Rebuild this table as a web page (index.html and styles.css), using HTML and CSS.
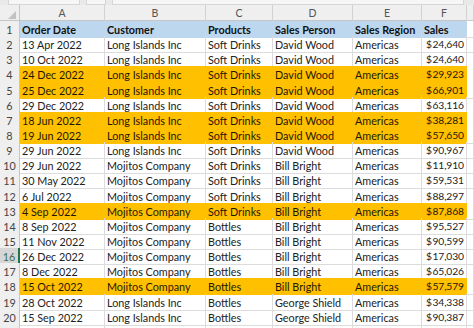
FILE: index.html
```html
<!DOCTYPE html>
<html>
<head>
<meta charset="utf-8">
<link rel="stylesheet" href="styles.css">
</head>
<body>
<div class="sheet">
  <div class="topbar"><span class="box b1"></span><span class="box b2"></span><span class="box b3"></span></div>
  <div class="row colhead">
    <div class="corner"><span class="tri"></span></div>
    <div class="ch">A</div><div class="ch">B</div><div class="ch">C</div><div class="ch">D</div><div class="ch">E</div><div class="ch">F</div><div class="ch"></div>
  </div>
  <div class="row title"><div class="rh">1</div><div class="c">Order Date</div><div class="c">Customer</div><div class="c">Products</div><div class="c">Sales Person</div><div class="c">Sales Region</div><div class="c">Sales</div><div class="c g"></div></div>
  <div class="row"><div class="rh">2</div><div class="c">13 Apr 2022</div><div class="c">Long Islands Inc</div><div class="c">Soft Drinks</div><div class="c">David Wood</div><div class="c">Americas</div><div class="c m"><span>$</span><span>24,640</span></div><div class="c g"></div></div>
  <div class="row"><div class="rh">3</div><div class="c">10 Oct 2022</div><div class="c">Long Islands Inc</div><div class="c">Soft Drinks</div><div class="c">David Wood</div><div class="c">Americas</div><div class="c m"><span>$</span><span>24,640</span></div><div class="c g"></div></div>
  <div class="row hi"><div class="rh">4</div><div class="c">24 Dec 2022</div><div class="c">Long Islands Inc</div><div class="c">Soft Drinks</div><div class="c">David Wood</div><div class="c">Americas</div><div class="c m"><span>$</span><span>29,923</span></div><div class="c g"></div></div>
  <div class="row hi"><div class="rh">5</div><div class="c">25 Dec 2022</div><div class="c">Long Islands Inc</div><div class="c">Soft Drinks</div><div class="c">David Wood</div><div class="c">Americas</div><div class="c m"><span>$</span><span>66,901</span></div><div class="c g"></div></div>
  <div class="row"><div class="rh">6</div><div class="c">29 Dec 2022</div><div class="c">Long Islands Inc</div><div class="c">Soft Drinks</div><div class="c">David Wood</div><div class="c">Americas</div><div class="c m"><span>$</span><span>63,116</span></div><div class="c g"></div></div>
  <div class="row hi"><div class="rh">7</div><div class="c">18 Jun 2022</div><div class="c">Long Islands Inc</div><div class="c">Soft Drinks</div><div class="c">David Wood</div><div class="c">Americas</div><div class="c m"><span>$</span><span>38,281</span></div><div class="c g"></div></div>
  <div class="row hi"><div class="rh">8</div><div class="c">19 Jun 2022</div><div class="c">Long Islands Inc</div><div class="c">Soft Drinks</div><div class="c">David Wood</div><div class="c">Americas</div><div class="c m"><span>$</span><span>57,650</span></div><div class="c g"></div></div>
  <div class="row"><div class="rh">9</div><div class="c">29 Jun 2022</div><div class="c">Long Islands Inc</div><div class="c">Soft Drinks</div><div class="c">David Wood</div><div class="c">Americas</div><div class="c m"><span>$</span><span>90,967</span></div><div class="c g"></div></div>
  <div class="row"><div class="rh">10</div><div class="c">29 Jun 2022</div><div class="c">Mojitos Company</div><div class="c">Soft Drinks</div><div class="c">Bill Bright</div><div class="c">Americas</div><div class="c m"><span>$</span><span>11,910</span></div><div class="c g"></div></div>
  <div class="row"><div class="rh">11</div><div class="c">30 May 2022</div><div class="c">Mojitos Company</div><div class="c">Soft Drinks</div><div class="c">Bill Bright</div><div class="c">Americas</div><div class="c m"><span>$</span><span>59,531</span></div><div class="c g"></div></div>
  <div class="row"><div class="rh">12</div><div class="c">6 Jul 2022</div><div class="c">Mojitos Company</div><div class="c">Soft Drinks</div><div class="c">Bill Bright</div><div class="c">Americas</div><div class="c m"><span>$</span><span>88,297</span></div><div class="c g"></div></div>
  <div class="row hi"><div class="rh">13</div><div class="c">4 Sep 2022</div><div class="c">Mojitos Company</div><div class="c">Soft Drinks</div><div class="c">Bill Bright</div><div class="c">Americas</div><div class="c m"><span>$</span><span>87,868</span></div><div class="c g"></div></div>
  <div class="row"><div class="rh">14</div><div class="c">8 Sep 2022</div><div class="c">Mojitos Company</div><div class="c">Bottles</div><div class="c">Bill Bright</div><div class="c">Americas</div><div class="c m"><span>$</span><span>95,527</span></div><div class="c g"></div></div>
  <div class="row"><div class="rh">15</div><div class="c">11 Nov 2022</div><div class="c">Mojitos Company</div><div class="c">Bottles</div><div class="c">Bill Bright</div><div class="c">Americas</div><div class="c m"><span>$</span><span>90,599</span></div><div class="c g"></div></div>
  <div class="row"><div class="rh active">16</div><div class="c">26 Dec 2022</div><div class="c">Mojitos Company</div><div class="c">Bottles</div><div class="c">Bill Bright</div><div class="c">Americas</div><div class="c m"><span>$</span><span>17,030</span></div><div class="c g"></div></div>
  <div class="row"><div class="rh">17</div><div class="c">8 Dec 2022</div><div class="c">Mojitos Company</div><div class="c">Bottles</div><div class="c">Bill Bright</div><div class="c">Americas</div><div class="c m"><span>$</span><span>65,026</span></div><div class="c g"></div></div>
  <div class="row hi"><div class="rh">18</div><div class="c">15 Oct 2022</div><div class="c">Mojitos Company</div><div class="c">Bottles</div><div class="c">Bill Bright</div><div class="c">Americas</div><div class="c m"><span>$</span><span>57,579</span></div><div class="c g"></div></div>
  <div class="row"><div class="rh">19</div><div class="c">28 Oct 2022</div><div class="c">Long Islands Inc</div><div class="c">Bottles</div><div class="c">George Shield</div><div class="c">Americas</div><div class="c m"><span>$</span><span>34,338</span></div><div class="c g"></div></div>
  <div class="row"><div class="rh">20</div><div class="c">15 Sep 2022</div><div class="c">Long Islands Inc</div><div class="c">Bottles</div><div class="c">George Shield</div><div class="c">Americas</div><div class="c m"><span>$</span><span>90,387</span></div><div class="c g"></div></div>
  <div class="row"><div class="rh"></div><div class="c"></div><div class="c"></div><div class="c"></div><div class="c"></div><div class="c"></div><div class="c"></div><div class="c g"></div></div>
</div>
</body>
</html>
```
FILE: styles.css
```css
html, body {
  margin: 0;
  padding: 0;
  background: #ffffff;
}
.sheet {
  width: 474px;
  height: 328px;
  overflow: hidden;
  font-family: Lato, "Noto Sans", sans-serif;
  font-size: 10.8px;
  color: #222222;
}
.topbar {
  height: 5px;
  background: #e9e9e9;
  display: flex;
  gap: 6px;
  padding-left: 8px;
}
.topbar .box {
  height: 4px;
  background: #f6f6f6;
  border: 1px solid #d6d6d6;
  border-top: none;
}
.topbar .b1 { width: 70px; }
.topbar .b2 { width: 18px; }
.topbar .b3 { width: 350px; }
.row {
  display: grid;
  grid-template-columns: 20px 85px 101px 67px 80px 69px 45px 7px;
  height: 15.15px;
}
.colhead {
  height: 16px;
  background: #efefef;
  border-bottom: 1px solid #c6c6c6;
  box-sizing: border-box;
}
.corner {
  position: relative;
  border-right: 1px solid #c6c6c6;
}
.tri {
  position: absolute;
  right: 3px;
  bottom: 2px;
  width: 0;
  height: 0;
  border-left: 8px solid transparent;
  border-bottom: 8px solid #c2c2c2;
}
.ch {
  border-right: 1px solid #d2d2d2;
  text-align: center;
  color: #555;
  font-size: 10.5px;
  line-height: 16px;
}
.rh {
  background: #efefef;
  border-right: 1px solid #c6c6c6;
  border-bottom: 1px solid #d9d9d9;
  text-align: center;
  color: #444;
  font-size: 10.8px;
  line-height: 15px;
  padding-top: 1px;
  box-sizing: border-box;
}
.rh.active {
  background: #d6d6d6;
  color: #3c6e52;
  border-right: 2px solid #217346;
}
.c {
  border-right: 1px solid #dcdcdc;
  border-bottom: 1px solid #dcdcdc;
  box-sizing: border-box;
  padding: 1px 2px 0 2px;
  line-height: 15px;
  white-space: nowrap;
  overflow: hidden;
}
.m {
  display: flex;
  justify-content: space-between;
  padding: 1px 2px 0 4px;
  font-size: 10.3px;
  letter-spacing: -0.1px;
}
.title .c {
  background: #bdd7ee;
  border-color: #bdd7ee;
  font-weight: bold;
  color: #111;
}
.title .c.g {
  background: #fff;
  border-right-color: #dcdcdc;
  border-bottom-color: #dcdcdc;
}
.hi .c {
  background: #ffc000;
  border-color: #ffc000;
  color: #1f1800;
}
.hi .c.g {
  background: #fff;
  border-right-color: #dcdcdc;
  border-bottom-color: #dcdcdc;
}
```
